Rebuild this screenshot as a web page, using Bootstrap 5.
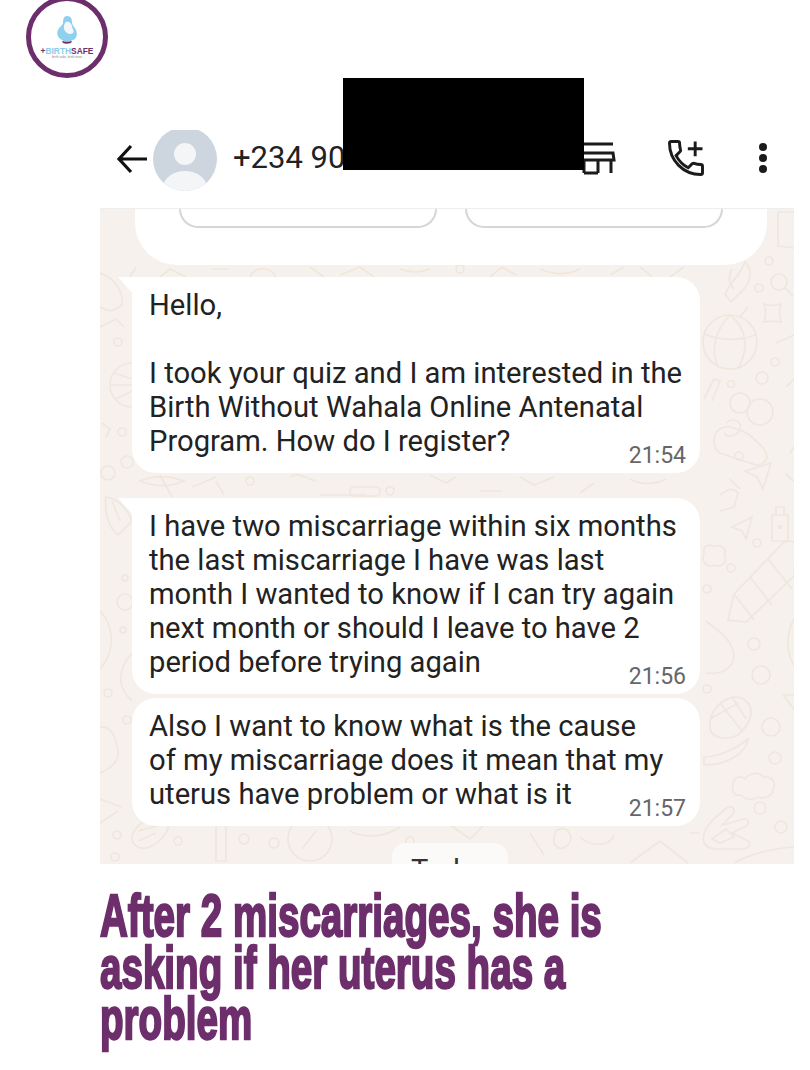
<!DOCTYPE html>
<html lang="en">
<head>
  <meta charset="UTF-8" />
  <title>After 2 miscarriages</title>
  <link href="https://cdn.jsdelivr.net/npm/bootstrap@5.3.3/dist/css/bootstrap.min.css" rel="stylesheet" />
  <style>
    body {
      margin: 0;
      background: #fff;
      overflow: hidden;
      font-family: Roboto, sans-serif;
    }

    .page-wrap {
      position: relative;
      width: 810px;
      height: 1070px;
      overflow: hidden;
    }

    .logo-row {
      margin-top: -4px;
      height: 134px;
      padding-left: 26px;
    }

    .logo-ring {
      width: 82px;
      height: 82px;
      border: 5px solid #6d2e6c;
      border-radius: 50%;
      background: #fff;
      padding-top: 15px;
    }

    .logo-word {
      font-family: "Liberation Sans", sans-serif;
      font-size: 8.4px;
      font-weight: 700;
      line-height: 8px;
      margin-top: 3px;
      color: #8ccdec;
      white-space: nowrap;
    }

    .logo-word b {
      color: #6d2e6c;
    }

    .logo-tag {
      font-family: "Liberation Sans", sans-serif;
      font-size: 3.4px;
      line-height: 4px;
      color: #888;
      white-space: nowrap;
    }

    .shot {
      margin-left: 100px;
      width: 694px;
    }

    .wa-head {
      height: 79px;
      border-bottom: 1px solid #eee;
      overflow: hidden;
      padding-left: 16px;
    }

    .wa-back {
      margin-top: 14px;
      flex: none;
    }

    .wa-avatar {
      margin-left: 5px;
      flex: none;
    }

    .wa-number {
      font-size: 31px;
      color: #222;
      margin-left: 16px;
      margin-top: 12px;
      line-height: 1;
    }

    .wa-chat {
      position: relative;
      height: 655px;
      background: #f6f1ec;
      overflow: hidden;
    }

    .doodles {
      position: absolute;
      inset: 0;
    }

    .top-card {
      position: relative;
      margin-left: 35px;
      width: 632px;
      height: 56px;
      background: #fff;
      border-radius: 0 0 42px 42px;
      padding: 0 44px;
    }

    .top-btn {
      width: 258px;
      height: 19px;
      border: 2px solid #d6d6d6;
      border-top: 0;
      border-radius: 0 0 26px 26px;
    }

    .msg-list {
      position: relative;
      margin-left: 32px;
      width: 568px;
    }

    .msg-bubble {
      position: relative;
      background: #fff;
      border-radius: 24px;
      padding: 11px 17px 0;
      font-size: 29.2px;
      line-height: 34px;
      color: #222;
      white-space: nowrap;
    }

    .msg-one { height: 196px; margin-top: 12px; border-top-left-radius: 0; }
    .msg-two { height: 196px; margin-top: 25px; border-top-left-radius: 0; }
    .msg-three { height: 128px; margin-top: 4px; }

    .msg-tail {
      position: absolute;
      left: -14px;
      top: 0;
    }

    .msg-time {
      position: absolute;
      right: 14px;
      bottom: 2px;
      font-size: 23px;
      line-height: 30px;
      color: #666;
    }

    .day-pill {
      position: absolute;
      left: 292px;
      top: 634px;
      width: 116px;
      height: 21px;
      overflow: hidden;
      background: #fbfaf8;
      border-radius: 14px 14px 0 0;
      text-align: center;
      font-size: 29px;
      line-height: 54px;
      color: #333;
    }

    .censor {
      position: absolute;
      left: 343px;
      top: 78px;
      width: 241px;
      height: 92px;
      background: #000;
    }

    .head-icon {
      position: absolute;
    }

    .icon-store { left: 576px; top: 140px; }
    .icon-call { left: 664px; top: 136px; }
    .icon-more { left: 755px; top: 141px; }

    .headline {
      margin: 26px 0 0 100px;
      font-family: "Liberation Sans", sans-serif;
      font-weight: 700;
      font-size: 60px;
      line-height: 51.5px;
      color: #6d2e6c;
      -webkit-text-stroke: 2.4px #6d2e6c;
      white-space: nowrap;
      transform-origin: left center;
      transform: scaleX(0.643);
    }
  </style>
</head>
<body>
  <div class="page-wrap">

    <div class="logo-row">
      <div class="logo-ring d-flex flex-column align-items-center">
        <svg width="20" height="28" viewBox="0 0 20 28" aria-hidden="true">
          <path d="M10 0c4 0 5 3 5 6 0 3 2 4 4 8 2 5 0 9-3 10-4 2-8 2-11 0-4-2-6-6-4-10 1-3 4-4 5-7 0-4 1-7 4-7z" fill="#8fd0ef"/>
          <path d="M9 6c3-1 5 1 6 4 0 3 3 5 1 7-2 2-6 1-8-2-2-3-1-7 1-9z" fill="#f4f8fb"/>
          <path d="M5 25c3 1 7 1 10 0l-1 2c-3 1-6 1-8 0z" fill="#6d2e6c"/>
        </svg>
        <div class="logo-word"><b>+</b>BIRTH<b>SAFE</b></div>
        <div class="logo-tag">birth safe, birth wise</div>
      </div>
    </div>

    <div class="shot">
      <div class="wa-head d-flex align-items-start">
        <svg class="wa-back" width="32" height="30" viewBox="0 0 32 30" aria-hidden="true">
          <path d="M31 15H4M15 2 3 15l12 13" fill="none" stroke="#111" stroke-width="3.2"/>
        </svg>
        <svg class="wa-avatar" width="64" height="62" viewBox="0 0 64 62" aria-hidden="true">
          <defs><clipPath id="av"><circle cx="32" cy="29" r="32"/></clipPath></defs>
          <circle cx="32" cy="29" r="32" fill="#cdd6de"/>
          <circle cx="32" cy="24" r="11" fill="#f3f5f7"/>
          <ellipse cx="32" cy="58" rx="22" ry="17" fill="#f3f5f7" clip-path="url(#av)"/>
        </svg>
        <div class="wa-number">+234 90</div>
      </div>

      <div class="wa-chat">
        <svg class="doodles" width="694" height="655" viewBox="0 0 694 655" fill="none" stroke="#efe7de" stroke-width="1.7" aria-hidden="true">
          <!-- right side -->
          <path d="M678 3v34l16 2M678 3h16"/>
          <circle cx="669" cy="52" r="4"/><circle cx="679" cy="73" r="8"/><path d="M685 79l8 8"/>
          <circle cx="659" cy="79" r="4"/>
          <path d="M625 85c6-14 14-16 20-32 8 8 6 20-2 28l-12 12zM632 60c-4 8-4 14 2 20"/>
          <path d="M664 95c5 2 10 2 17 0-2 6-2 12 0 18-6-1-12-1-17 0 2-6 2-12 0-18z"/>
          <circle cx="630" cy="133" r="27"/>
          <path d="M630 106c-14 14-20 34-12 52M630 106c16 12 20 34 8 53M605 125c12 6 36 8 52 0"/>
          <path d="M640 108l8-10"/><path d="M676 134l18-8M686 178l8-8"/>
          <circle cx="675" cy="153" r="4"/><circle cx="662" cy="169" r="6"/><circle cx="631" cy="175" r="3.5"/>
          <path d="M604 190l10-20 6 2-8 20"/>
          <circle cx="640" cy="194" r="10"/><circle cx="660" cy="203" r="13"/>
          <path d="M614 232c0-12 12-18 22-12 12 2 18 10 28 20 6 8 2 16-8 16-12-4-26-8-36-12-4-2-6-6-6-12z"/>
          <path d="M626 214c6-6 16-2 14 6-2 6-12 10-16 4"/>
          <circle cx="639" cy="247" r="4"/>
          <path d="M645 262l26-8-8 26-6-12z"/><path d="M690 244l4-6M686 264c2 4 4 6 8 8"/>
          <path d="M620 286c8-6 12-8 18-2l-4 14-14 4M630 270l10 10"/>
          <path d="M672 306h16v26h-16zM676 298h8v8h-8z"/><circle cx="680" cy="318" r="1.5"/>
          <path d="M632 318l20-10-6 22-4-8z"/>
          <path d="M604 344c-2-8 8-10 10-6 6-4 14 2 10 8 4 6-2 14-10 10-6 4-14-4-10-12z"/>
          <circle cx="657" cy="334" r="4"/><circle cx="631" cy="359" r="4"/><circle cx="607" cy="380" r="4"/>
          <path d="M628 411l6-26 48-50c4-4 10-4 14 0l-2 32-48 46-18-2z"/>
          <path d="M634 385l20 26M650 368l22 28M668 350l24 30"/>
          <path d="M606 412c10 8 26 18 28 34 0 14-14 20-28 18"/>
          <circle cx="654" cy="435" r="6"/><circle cx="661" cy="466" r="9"/><circle cx="607" cy="480" r="4"/>
          <path d="M694 410c-8 14-8 34 0 46"/>
          <path d="M610 514c0-16 22-34 36-22 10 8 4 24-8 34-12 6-30 4-28-12z"/>
          <path d="M620 494l22 28M610 510l28-16M632 488l14 22"/>
          <path d="M604 548c10 0 30-6 44-18-2 14-20 26-44 26z"/>
          <path d="M683 486l11 14M683 486h11"/>
          <circle cx="671" cy="518" r="9"/><circle cx="675" cy="549" r="6"/>
          <path d="M633 576c0-8 8-10 12-6 4-6 14-8 18-2 8-2 14 6 10 12 0 8-10 10-14 8-8 4-14 2-18-2-6 2-10-4-8-10z"/>
          <circle cx="660" cy="599" r="6"/><circle cx="681" cy="618" r="6"/>
          <path d="M604 634c-4-12 8-24 24-36 6-2 8 4 4 8l-10 10 8-2 14-4c6 0 6 6 0 8l-12 6 16 8c4 4 0 8-6 8h-24c-8 0-12-2-14-6z"/>
          <path d="M612 630l14-10 8 8-14 6z"/>
          <path d="M634 654c14-8 36-14 60-16"/>
          <!-- left side -->
          <path d="M0 64c12 4 24 16 22 32-8 6-12 8-22 2M0 118l16-8 8 8"/>
          <circle cx="18" cy="133" r="4"/>
          <circle cx="32" cy="176" r="22"/><path d="M10 176h22M14 164l18 6M16 190l16-8"/>
          <circle cx="22" cy="223" r="4"/><path d="M2 214l8 6-4 8"/>
          <circle cx="27" cy="253" r="6"/><circle cx="8" cy="264" r="7"/>
          <path d="M6 288c12 2 22 12 26 24l-14 14c-8-6-14-20-12-38zM12 292l8 20"/>
          <circle cx="25" cy="369" r="3"/><circle cx="25" cy="393" r="8"/><circle cx="23" cy="421" r="3"/>
          <path d="M0 402c14 14 16 40 0 58"/>
          <path d="M32 444c-14 16-16 34 0 48"/>
          <circle cx="8" cy="484" r="4"/><circle cx="27" cy="511" r="4"/>
          <path d="M0 518c12-2 16 12 18 24 2 10-8 18-18 22"/>
          <path d="M0 590l22 8M0 614l18-12"/>
          <circle cx="17" cy="626" r="4"/><circle cx="15" cy="648" r="4"/>
          <!-- strips between the bubbles -->
          <path d="M30 68l6-10M60 68l10-8 16 8M112 60h16M150 68c4-10 20-12 26 0M210 58l14 10M240 66l20-8 14 10M300 60c10 4 20 4 30 0"/>
          <circle cx="360" cy="60" r="4"/>
          <path d="M390 68l12-10 14 8M440 60c14 6 28 6 40 0M510 66l14-8M540 58c6 4 10 8 12 10M570 68l14-10"/>
          <path d="M40 272c14-6 28-6 44 0-14 6-30 6-44 0zM60 266l12 22M92 278l24-10M116 272l8 14"/>
          <circle cx="150" cy="272" r="4"/>
          <path d="M190 268c8-6 16 2 26 4M220 286h46"/><rect x="250" y="278" width="30" height="9" rx="4"/>
          <circle cx="290" cy="282" r="4"/>
          <path d="M330 266l16 8 10-6M380 282h22M420 268l14 8 20-8M480 284l14-10M530 270c10 6 24 6 36 0"/>
          <path d="M32 626c6-12 18-20 30-18 12 6 6 20-12 30-10 4-20-2-18-12zM38 622l22-6M38 632l18-8"/>
          <circle cx="78" cy="632" r="4"/>
          <path d="M116 620c0-8 10-8 10 0v32h-10z"/>
          <circle cx="144" cy="630" r="5"/><circle cx="174" cy="634" r="5"/>
          <circle cx="210" cy="630" r="22"/><path d="M202 640l14-18"/>
          <path d="M250 622c14 8 36 6 50-4"/><circle cx="310" cy="632" r="4"/>
          <path d="M350 616l20 14 14-14M430 624l14 22M456 622c10-8 20 6 12 14-10 8-18 0-12-14zM480 628c10 10 30 10 34-2"/>
          <path d="M530 654l30-22 28 22M590 624h10"/>
        </svg>

        <div class="top-card d-flex justify-content-between">
          <div class="top-btn"></div>
          <div class="top-btn"></div>
        </div>

        <div class="msg-list">
          <div class="msg-bubble msg-one">
            <svg class="msg-tail" width="16" height="18" viewBox="0 0 16 18" aria-hidden="true"><path d="M0 0h16v18z" fill="#fff"/></svg>
            Hello,<br><br>I took your quiz and I am interested in the<br>Birth Without Wahala Online Antenatal<br>Program. How do I register?
            <span class="msg-time">21:54</span>
          </div>
          <div class="msg-bubble msg-two">
            <svg class="msg-tail" width="16" height="18" viewBox="0 0 16 18" aria-hidden="true"><path d="M0 0h16v18z" fill="#fff"/></svg>
            I have two miscarriage within six months<br>the last miscarriage I have was last<br>month I wanted to know if I can try again<br>next month or should I leave to have 2<br>period before trying again
            <span class="msg-time">21:56</span>
          </div>
          <div class="msg-bubble msg-three">
            Also I want to know what is the cause<br>of my miscarriage does it mean that my<br>uterus have problem or what is it
            <span class="msg-time">21:57</span>
          </div>
        </div>

        <div class="day-pill">Today</div>
      </div>
    </div>

    <h1 class="headline">After 2 miscarriages, she is<br>asking if her uterus has a<br>problem</h1>

    <!-- header icons sit beside the redaction box -->
    <svg class="head-icon icon-store" width="40" height="36" viewBox="0 0 40 36" fill="none" stroke="#1b1b1b" stroke-width="3" aria-hidden="true">
      <path d="M6 4h31M6 13h31l1 7H8M35 20v13M22 33H8M8 20v13M22 20v13"/>
    </svg>
    <svg class="head-icon icon-call" width="44" height="44" viewBox="0 0 24 24" fill="none" stroke="#1b1b1b" stroke-width="1.6" aria-hidden="true">
      <path d="M20 15.5c-1.2 0-2.4-.2-3.6-.6-.3-.1-.7 0-1 .2l-2.2 2.2c-2.8-1.4-5.1-3.8-6.6-6.6l2.2-2.2c.3-.3.4-.7.2-1-.3-1.1-.5-2.3-.5-3.5 0-.6-.4-1-1-1H4c-.6 0-1 .4-1 1 0 9.4 7.6 17 17 17 .6 0 1-.4 1-1v-3.5c0-.6-.4-1-1-1z"/>
      <path d="M17 3v8M13 7h8"/>
    </svg>
    <svg class="head-icon icon-more" width="16" height="34" viewBox="0 0 16 34" fill="#1b1b1b" aria-hidden="true">
      <circle cx="8" cy="6" r="4"/><circle cx="8" cy="17" r="4"/><circle cx="8" cy="28" r="4"/>
    </svg>
    <div class="censor"></div>
  </div>
</body>
</html>
